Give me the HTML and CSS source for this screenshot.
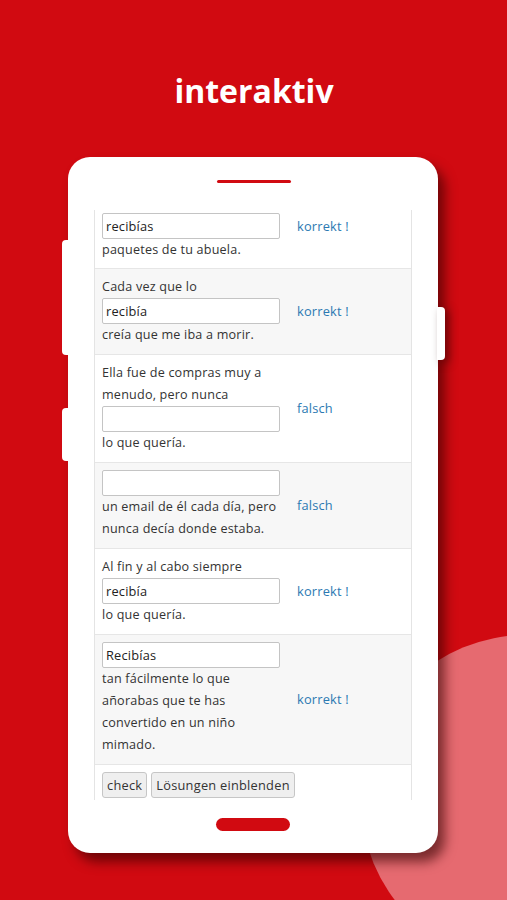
FILE: index.html
```html
<!DOCTYPE html>
<html lang="es">
<head>
<meta charset="utf-8">
<title>interaktiv</title>
<link rel="stylesheet" href="styles.css">
</head>
<body>
<div class="screen">
  <div class="blob"></div>
  <h1 class="title">interaktiv</h1>
  <div class="phone">
    <span class="side side-l1"></span>
    <span class="side side-l2"></span>
    <span class="side side-r1"></span>
    <div class="speaker"></div>
    <div class="viewport">
      <div class="row row-first">
        <div class="cell">
          <div class="field">recibías</div>
          <p>paquetes de tu abuela.</p>
        </div>
        <div class="status status-top">korrekt !</div>
      </div>
      <div class="row alt">
        <div class="cell">
          <p>Cada vez que lo</p>
          <div class="field">recibía</div>
          <p>creía que me iba a morir.</p>
        </div>
        <div class="status">korrekt !</div>
      </div>
      <div class="row">
        <div class="cell">
          <p>Ella fue de compras muy a<br>menudo, pero nunca</p>
          <div class="field"></div>
          <p>lo que quería.</p>
        </div>
        <div class="status">falsch</div>
      </div>
      <div class="row alt">
        <div class="cell">
          <div class="field"></div>
          <p>un email de él cada día, pero<br>nunca decía donde estaba.</p>
        </div>
        <div class="status">falsch</div>
      </div>
      <div class="row">
        <div class="cell">
          <p>Al fin y al cabo siempre</p>
          <div class="field">recibía</div>
          <p>lo que quería.</p>
        </div>
        <div class="status">korrekt !</div>
      </div>
      <div class="row alt">
        <div class="cell">
          <div class="field">Recibías</div>
          <p>tan fácilmente lo que<br>añorabas que te has<br>convertido en un niño<br>mimado.</p>
        </div>
        <div class="status">korrekt !</div>
      </div>
      <div class="actions">
        <button class="btn">check</button>
        <button class="btn">Lösungen einblenden</button>
      </div>
    </div>
    <div class="home"></div>
  </div>
</div>
</body>
</html>
```
FILE: styles.css
```css
* { box-sizing: border-box; }
html, body {
  margin: 0;
  padding: 0;
  background: #d10a11;
}
.screen {
  position: relative;
  width: 507px;
  height: 900px;
  overflow: hidden;
  background: #d10a11;
  padding-top: 68px;
}
.blob {
  position: absolute;
  left: 361px;
  top: 635px;
  width: 330px;
  height: 330px;
  border-radius: 50%;
  background: #e66a70;
}
.title {
  position: relative;
  margin: 0;
  text-align: center;
  color: #fff;
  font-family: "Open Sans", sans-serif;
  font-weight: 700;
  font-size: 32px;
  line-height: 46px;
  letter-spacing: 0;
  padding-left: 1px;
}
.phone {
  position: relative;
  margin: 43px 0 0 68px;
  width: 370px;
  height: 696px;
  background: #fff;
  border-radius: 22px;
  box-shadow: 7px 9px 12px rgba(50, 0, 0, 0.6);
  padding: 23px 0 22px 26px;
}
.side {
  position: absolute;
  background: #fff;
  width: 8px;
}
.side-l1 { left: -6px; top: 83px; height: 115px; border-radius: 4px 0 0 4px; }
.side-l2 { left: -6px; top: 251px; height: 53px; border-radius: 4px 0 0 4px; }
.side-r1 { right: -7px; top: 150px; height: 53px; border-radius: 0 4px 4px 0; box-shadow: 4px 3px 8px rgba(50,0,0,0.5); }
.speaker {
  margin-left: 123px;
  width: 74px;
  height: 3px;
  border-radius: 2px;
  background: #d10a11;
}
.viewport {
  margin-top: 27px;
  width: 318px;
  height: 590px;
  overflow: hidden;
  border-left: 1px solid #e4e4e4;
  border-right: 1px solid #e4e4e4;
  font-family: "Open Sans", sans-serif;
  font-size: 12.6px;
  letter-spacing: 0.2px;
  color: #333;
}
.row {
  display: grid;
  grid-template-columns: 195px 1fr;
  align-items: center;
  padding: 7px 8px 8px 7px;
  border-bottom: 1px solid #e6e6e6;
  background: #fff;
}
.row.alt { background: #f7f7f7; }
.row-first { padding-top: 3px; padding-bottom: 7px; }
.cell p {
  margin: 0;
  line-height: 22px;
  white-space: nowrap;
}
.field {
  width: 178px;
  height: 26px;
  border: 1px solid #c4c4c4;
  border-radius: 2px;
  background: #fff;
  padding: 0 3px;
  line-height: 24px;
  color: #222;
  font-size: 12.8px;
}
.status {
  color: #2b79b2;
  font-size: 12.8px;
}
.status-top {
  align-self: start;
  line-height: 26px;
}
.actions {
  display: flex;
  gap: 4px;
  padding: 7px 7px;
  background: #fff;
}
.btn {
  font-family: "Open Sans", sans-serif;
  font-size: 12.8px;
  letter-spacing: 0.25px;
  color: #333;
  height: 26px;
  padding: 0 4px;
  background: #efefef;
  border: 1px solid #c6c6c6;
  border-radius: 3px;
}
.home {
  margin: 18px 0 0 122px;
  width: 74px;
  height: 13px;
  border-radius: 7px;
  background: #d10a11;
}
```
